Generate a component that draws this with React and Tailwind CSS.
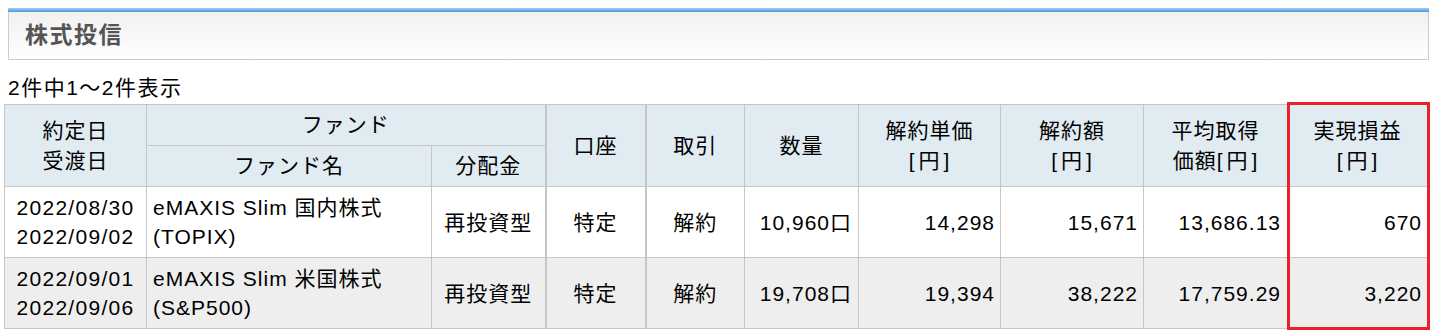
import React from 'react';

const rows = [
    {
        trade: '2022/08/30',
        settle: '2022/09/02',
        fund1: 'eMAXIS Slim 国内株式',
        fund2: '(TOPIX)',
        dist: '再投資型',
        account: '特定',
        type: '解約',
        qty: '10,960口',
        unit: '14,298',
        amount: '15,671',
        avg: '13,686.13',
        pnl: '670',
    },
    {
        trade: '2022/09/01',
        settle: '2022/09/06',
        fund1: 'eMAXIS Slim 米国株式',
        fund2: '(S&P500)',
        dist: '再投資型',
        account: '特定',
        type: '解約',
        qty: '19,708口',
        unit: '19,394',
        amount: '38,222',
        avg: '17,759.29',
        pnl: '3,220',
    },
];

const th = 'border border-[#c6c6c6] bg-[#e1ebf2] font-normal text-center align-middle p-0';
const td = 'border border-[#c6c6c6] align-middle p-0';

// "[円]" unit label, brackets sit a little apart from the glyph
const Yen = () => (
    <span>[<span className="mx-[3px]">円</span>]</span>
);

const App = () => {
    return (
        <div
            className="w-full h-[335px] bg-white text-black pt-[8px] overflow-hidden"
            style={{ fontFamily: '"Liberation Sans", "Noto Sans CJK JP", sans-serif' }}
        >
            {/* section title panel */}
            <div className="ml-[8px] mr-[3px]">
                <div className="h-[4px] bg-gradient-to-b from-[#a2cff5] to-[#4c96dc]"></div>
                <div className="h-[48px] border border-t-0 border-[#cccccc] bg-gradient-to-b from-[#f1f1f1] to-white flex items-center pl-[16px]">
                    <h1 className="text-[23px] font-bold tracking-[1.5px] text-[#555555] leading-none">株式投信</h1>
                </div>
            </div>

            <div className="ml-[8px] mt-[13px] h-[30px] text-[21px] leading-[30px] tracking-[1.5px]">2件中1～2件表示</div>

            <div className="relative ml-[4px] mt-[1px] w-[1423px]">
                <table className="w-[1423px] table-fixed border-collapse text-[21px] tracking-[1px]">
                    <colgroup>
                        <col className="w-[142px]" />
                        <col className="w-[285px]" />
                        <col className="w-[114px]" />
                        <col className="w-[100px]" />
                        <col className="w-[99px]" />
                        <col className="w-[114px]" />
                        <col className="w-[142px]" />
                        <col className="w-[143px]" />
                        <col className="w-[144px]" />
                        <col className="w-[140px]" />
                    </colgroup>
                    <thead>
                        <tr className="h-[41px] leading-[30px]">
                            <th rowSpan={2} className={th}>約定日<br />受渡日</th>
                            <th colSpan={2} className={th}>ファンド</th>
                            <th rowSpan={2} className={th + ' border-l-2 border-l-[#c6c6c6]'}>口座</th>
                            <th rowSpan={2} className={th + ' border-l-2 border-l-[#c6c6c6]'}>取引</th>
                            <th rowSpan={2} className={th}>数量</th>
                            <th rowSpan={2} className={th}>解約単価<br /><Yen /></th>
                            <th rowSpan={2} className={th}>解約額<br /><Yen /></th>
                            <th rowSpan={2} className={th}>平均取得<br />価額<Yen /></th>
                            <th rowSpan={2} className={th}>実現損益<br /><Yen /></th>
                        </tr>
                        <tr className="h-[41px] leading-[30px]">
                            <th className={th}>ファンド名</th>
                            <th className={th}>分配金</th>
                        </tr>
                    </thead>
                    <tbody>
                        {rows.map((r, i) => (
                            <tr key={r.trade} className={'h-[71px] leading-[29px] ' + (i % 2 ? 'bg-[#eeeeee]' : 'bg-white')}>
                                <td className={td + ' text-center tracking-[1.3px]'}>{r.trade}<br />{r.settle}</td>
                                <td className={td + ' pl-[6px] text-left'}>{r.fund1}<br />{r.fund2}</td>
                                <td className={td + ' text-center'}>{r.dist}</td>
                                <td className={td + ' text-center border-l-2'}>{r.account}</td>
                                <td className={td + ' text-center border-l-2'}>{r.type}</td>
                                <td className={td + ' text-right pr-[6px]'}>{r.qty}</td>
                                <td className={td + ' text-right pr-[5px]'}>{r.unit}</td>
                                <td className={td + ' text-right pr-[5px]'}>{r.amount}</td>
                                <td className={td + ' text-right pr-[6px]'}>{r.avg}</td>
                                <td className={td + ' text-right pr-[5px]'}>{r.pnl}</td>
                            </tr>
                        ))}
                    </tbody>
                </table>
                {/* highlight box around realised P&L column */}
                <div className="absolute top-[-2px] bottom-[-1px] right-[-3px] w-[143px] border-[3px] border-[#e8212b] pointer-events-none"></div>
            </div>
        </div>
    );
};

export default App;
